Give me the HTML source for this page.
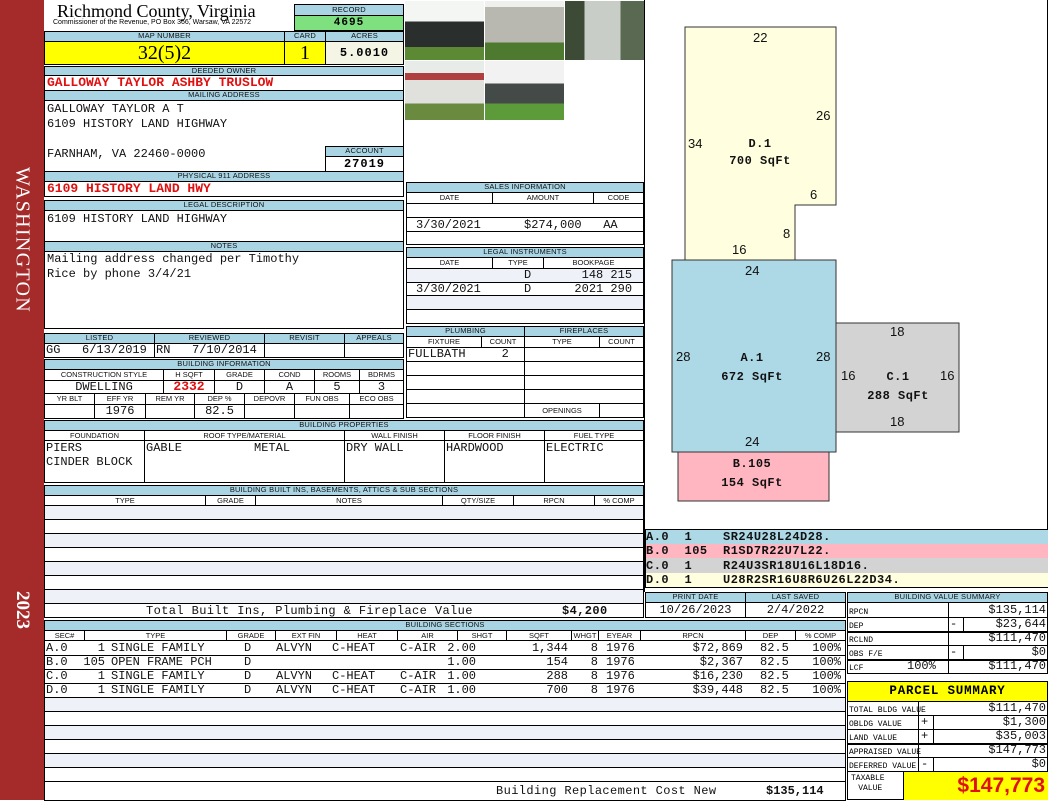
<!DOCTYPE html>
<html><head><meta charset="utf-8"><style>
*{margin:0;padding:0}
body{width:1050px;height:800px;position:relative;background:#fff;overflow:hidden;font-family:"Liberation Sans",sans-serif}
.a{position:absolute;box-sizing:border-box}
.bx{position:absolute;box-sizing:border-box;border:1px solid #000}
.hd{position:absolute;box-sizing:border-box;background:#a9d4e4;border:1px solid #000;font:7.5px "Liberation Sans",sans-serif;color:#111;text-align:center;line-height:8px;overflow:hidden;white-space:nowrap;letter-spacing:.2px}
.sh{position:absolute;box-sizing:border-box;border:1px solid #000;font:7.5px "Liberation Sans",sans-serif;color:#111;text-align:center;line-height:9px;white-space:nowrap;background:#fff}
.m{position:absolute;font-family:"Liberation Mono",monospace;font-size:12px;white-space:pre;line-height:14px;color:#111}
.r{color:#e01010;font-weight:bold;font-size:13px}
.st{position:absolute;box-sizing:border-box;background:#eef2f8}
.ln{position:absolute;height:1px;background:#000}
.vl{position:absolute;width:1px;background:#000}
.sk{position:absolute;font:13px "Liberation Sans",sans-serif;color:#111}
.sl{position:absolute;font:bold 12px "Liberation Mono",monospace;color:#111;white-space:pre;text-align:center;letter-spacing:.5px}
.bv{position:absolute;font:8px "Liberation Mono",monospace;white-space:pre}
.rw{position:absolute;left:0;width:850px;height:14px}
.rw div{position:absolute;top:0;font-family:"Liberation Mono",monospace;font-size:12px;white-space:pre;line-height:14px;color:#111}
.rr{text-align:right}
</style></head><body>

<div class="a" style="left:0;top:0;width:44px;height:800px;background:#a52a2a"></div>
<div class="a" style="left:22px;top:240px;transform:translate(-50%,-50%) rotate(90deg);color:#fff;font:20px 'Liberation Serif',serif;white-space:nowrap;letter-spacing:1.3px">WASHINGTON</div>
<div class="a" style="left:22px;top:610px;transform:translate(-50%,-50%) rotate(90deg);color:#fff;font:bold 19px 'Liberation Serif',serif;white-space:nowrap">2023</div>

<div class="a" style="left:57px;top:1px;font:18px 'Liberation Serif',serif;color:#000">Richmond County, Virginia</div>
<div class="a" style="left:53px;top:19px;font:7px 'Liberation Sans',sans-serif;color:#000;white-space:nowrap">Commissioner of the Revenue, PO Box 366, Warsaw, VA 22572</div>
<div class="hd" style="left:294px;top:4px;width:110px;height:12px;line-height:10px">RECORD</div>
<div class="bx" style="left:294px;top:15px;width:110px;height:16px;background:#7fe07f;text-align:center;font:bold 11px 'Liberation Mono',monospace;line-height:14px;letter-spacing:1px">4695</div>

<div class="hd" style="left:44px;top:31px;width:241px;height:11px">MAP NUMBER</div>
<div class="hd" style="left:284px;top:31px;width:42px;height:11px">CARD</div>
<div class="hd" style="left:325px;top:31px;width:79px;height:11px">ACRES</div>
<div class="bx" style="left:44px;top:41px;width:241px;height:24px;background:#ffff00;text-align:center;font:20px 'Liberation Serif',serif;line-height:22px">32(5)2</div>
<div class="bx" style="left:284px;top:41px;width:42px;height:24px;background:#ffff00;text-align:center;font:20px 'Liberation Serif',serif;line-height:22px">1</div>
<div class="bx" style="left:325px;top:41px;width:79px;height:24px;background:#f5f5e6;text-align:center;font:bold 12px 'Liberation Mono',monospace;line-height:22px;letter-spacing:1px">5.0010</div>

<div class="hd" style="left:44px;top:66px;width:360px;height:10px">DEEDED OWNER</div>
<div class="bx" style="left:44px;top:75px;width:360px;height:16px"></div>
<div class="m r" style="left:47px;top:76px">GALLOWAY TAYLOR ASHBY TRUSLOW</div>
<div class="hd" style="left:44px;top:90px;width:360px;height:11px">MAILING ADDRESS</div>
<div class="bx" style="left:44px;top:100px;width:360px;height:72px"></div>
<div class="m" style="left:47px;top:102px">GALLOWAY TAYLOR A T</div>
<div class="m" style="left:47px;top:117px">6109 HISTORY LAND HIGHWAY</div>
<div class="m" style="left:47px;top:147px">FARNHAM, VA 22460-0000</div>
<div class="hd" style="left:325px;top:146px;width:79px;height:11px">ACCOUNT</div>
<div class="bx" style="left:325px;top:156px;width:79px;height:16px;text-align:center;font:bold 12px 'Liberation Mono',monospace;line-height:14px;letter-spacing:1px">27019</div>
<div class="hd" style="left:44px;top:171px;width:360px;height:11px">PHYSICAL 911 ADDRESS</div>
<div class="bx" style="left:44px;top:181px;width:360px;height:16px"></div>
<div class="m r" style="left:47px;top:182px">6109 HISTORY LAND HWY</div>

<div class="hd" style="left:44px;top:200px;width:360px;height:11px">LEGAL DESCRIPTION</div>
<div class="bx" style="left:44px;top:210px;width:360px;height:32px"></div>
<div class="m" style="left:47px;top:212px">6109 HISTORY LAND HIGHWAY</div>
<div class="hd" style="left:44px;top:241px;width:360px;height:11px">NOTES</div>
<div class="bx" style="left:44px;top:251px;width:360px;height:78px"></div>
<div class="m" style="left:47px;top:252px">Mailing address changed per Timothy</div>
<div class="m" style="left:47px;top:267px">Rice by phone 3/4/21</div>

<div class="hd" style="left:44px;top:333px;width:111px;height:11px">LISTED</div>
<div class="hd" style="left:154px;top:333px;width:111px;height:11px">REVIEWED</div>
<div class="hd" style="left:264px;top:333px;width:81px;height:11px">REVISIT</div>
<div class="hd" style="left:344px;top:333px;width:60px;height:11px">APPEALS</div>
<div class="bx" style="left:44px;top:343px;width:111px;height:15px"></div>
<div class="bx" style="left:154px;top:343px;width:111px;height:15px"></div>
<div class="bx" style="left:264px;top:343px;width:81px;height:15px"></div>
<div class="bx" style="left:344px;top:343px;width:60px;height:15px"></div>
<div class="m" style="left:46px;top:343px">GG   6/13/2019</div>
<div class="m" style="left:156px;top:343px">RN   7/10/2014</div>

<div class="hd" style="left:44px;top:359px;width:360px;height:11px">BUILDING INFORMATION</div>
<div class="sh" style="left:44px;top:369px;width:120px;height:12px">CONSTRUCTION STYLE</div>
<div class="sh" style="left:163px;top:369px;width:52px;height:12px">H SQFT</div>
<div class="sh" style="left:214px;top:369px;width:51px;height:12px">GRADE</div>
<div class="sh" style="left:264px;top:369px;width:51px;height:12px">COND</div>
<div class="sh" style="left:314px;top:369px;width:46px;height:12px">ROOMS</div>
<div class="sh" style="left:359px;top:369px;width:45px;height:12px">BDRMS</div>
<div class="bx m" style="left:44px;top:380px;width:120px;height:14px;text-align:center;line-height:12px">DWELLING</div>
<div class="bx m r" style="left:163px;top:380px;width:52px;height:14px;text-align:center;line-height:12px">2332</div>
<div class="bx m" style="left:214px;top:380px;width:51px;height:14px;text-align:center;line-height:12px">D</div>
<div class="bx m" style="left:264px;top:380px;width:51px;height:14px;text-align:center;line-height:12px">A</div>
<div class="bx m" style="left:314px;top:380px;width:46px;height:14px;text-align:center;line-height:12px">5</div>
<div class="bx m" style="left:359px;top:380px;width:45px;height:14px;text-align:center;line-height:12px">3</div>
<div class="sh" style="left:44px;top:393px;width:51px;height:12px">YR BLT</div>
<div class="sh" style="left:94px;top:393px;width:52px;height:12px">EFF YR</div>
<div class="sh" style="left:145px;top:393px;width:50px;height:12px">REM YR</div>
<div class="sh" style="left:194px;top:393px;width:51px;height:12px">DEP %</div>
<div class="sh" style="left:244px;top:393px;width:51px;height:12px">DEPOVR</div>
<div class="sh" style="left:294px;top:393px;width:56px;height:12px">FUN OBS</div>
<div class="sh" style="left:349px;top:393px;width:55px;height:12px">ECO OBS</div>
<div class="bx" style="left:44px;top:404px;width:51px;height:15px"></div>
<div class="bx m" style="left:94px;top:404px;width:52px;height:15px;text-align:center;line-height:13px">1976</div>
<div class="bx" style="left:145px;top:404px;width:50px;height:15px"></div>
<div class="bx m" style="left:194px;top:404px;width:51px;height:15px;text-align:center;line-height:13px">82.5</div>
<div class="bx" style="left:244px;top:404px;width:51px;height:15px"></div>
<div class="bx" style="left:294px;top:404px;width:56px;height:15px"></div>
<div class="bx" style="left:349px;top:404px;width:55px;height:15px"></div>

<!-- photos -->
<div class="a" style="left:405px;top:1px;width:79px;height:59px;background:linear-gradient(#f4f6f4 0 35%,#2a2e2c 35% 78%,#5c8a34 78%)"></div>
<div class="a" style="left:485px;top:1px;width:79px;height:59px;background:linear-gradient(#eef0ee 0 10%,#b8b8b0 10% 70%,#4d7a2e 70%)"></div>
<div class="a" style="left:565px;top:1px;width:79px;height:59px;background:linear-gradient(90deg,#3d4a36 0 25%,#c9cdc8 25% 70%,#5a6a52 70%)"></div>
<div class="a" style="left:405px;top:61px;width:79px;height:59px;background:linear-gradient(#e8ece8 0 20%,#b04040 20% 32%,#e0e0dc 32% 72%,#6a8a40 72%)"></div>
<div class="a" style="left:485px;top:61px;width:79px;height:59px;background:linear-gradient(#f2f2f2 0 38%,#444a48 38% 72%,#5c9a3a 72%)"></div>
<div class="vl" style="left:644px;top:0;height:592px"></div>
<div class="vl" style="left:1047px;top:0;height:530px"></div>

<div class="bx" style="left:406px;top:182px;width:238px;height:63px"></div>
<div class="hd" style="left:406px;top:182px;width:238px;height:11px">SALES INFORMATION</div>
<div class="sh" style="left:406px;top:192px;width:87px;height:12px">DATE</div>
<div class="sh" style="left:492px;top:192px;width:102px;height:12px">AMOUNT</div>
<div class="sh" style="left:593px;top:192px;width:51px;height:12px">CODE</div>
<div class="ln" style="left:406px;top:217px;width:238px"></div>
<div class="ln" style="left:406px;top:231px;width:238px"></div>
<div class="m" style="left:416px;top:218px">3/30/2021      $274,000   AA</div>

<div class="bx" style="left:406px;top:247px;width:238px;height:77px"></div>
<div class="hd" style="left:406px;top:247px;width:238px;height:11px">LEGAL INSTRUMENTS</div>
<div class="sh" style="left:406px;top:257px;width:87px;height:12px">DATE</div>
<div class="sh" style="left:492px;top:257px;width:52px;height:12px">TYPE</div>
<div class="sh" style="left:543px;top:257px;width:101px;height:12px">BOOKPAGE</div>
<div class="st" style="left:407px;top:269px;width:236px;height:13px"></div>
<div class="st" style="left:407px;top:296px;width:236px;height:13px"></div>
<div class="ln" style="left:406px;top:282px;width:238px"></div>
<div class="ln" style="left:406px;top:295px;width:238px"></div>
<div class="ln" style="left:406px;top:309px;width:238px"></div>
<div class="m" style="left:416px;top:268px">               D       148 215</div>
<div class="m" style="left:416px;top:282px">3/30/2021      D      2021 290</div>

<div class="bx" style="left:406px;top:326px;width:238px;height:92px"></div>
<div class="hd" style="left:406px;top:326px;width:119px;height:11px">PLUMBING</div>
<div class="hd" style="left:524px;top:326px;width:120px;height:11px">FIREPLACES</div>
<div class="sh" style="left:406px;top:336px;width:76px;height:12px">FIXTURE</div>
<div class="sh" style="left:481px;top:336px;width:44px;height:12px">COUNT</div>
<div class="sh" style="left:524px;top:336px;width:76px;height:12px">TYPE</div>
<div class="sh" style="left:599px;top:336px;width:45px;height:12px">COUNT</div>
<div class="vl" style="left:524px;top:336px;height:82px"></div>
<div class="ln" style="left:406px;top:361px;width:238px"></div>
<div class="ln" style="left:406px;top:375px;width:238px"></div>
<div class="ln" style="left:406px;top:389px;width:238px"></div>
<div class="ln" style="left:406px;top:403px;width:238px"></div>
<div class="m" style="left:408px;top:347px">FULLBATH     2</div>
<div class="sh" style="left:524px;top:403px;width:76px;height:15px;line-height:13px">OPENINGS</div>
<div class="bx" style="left:599px;top:403px;width:45px;height:15px"></div>

<div class="bx" style="left:44px;top:420px;width:600px;height:63px"></div>
<div class="hd" style="left:44px;top:420px;width:600px;height:11px">BUILDING PROPERTIES</div>
<div class="sh" style="left:44px;top:430px;width:101px;height:11px">FOUNDATION</div>
<div class="sh" style="left:144px;top:430px;width:201px;height:11px">ROOF TYPE/MATERIAL</div>
<div class="sh" style="left:344px;top:430px;width:101px;height:11px">WALL FINISH</div>
<div class="sh" style="left:444px;top:430px;width:101px;height:11px">FLOOR FINISH</div>
<div class="sh" style="left:544px;top:430px;width:100px;height:11px">FUEL TYPE</div>
<div class="vl" style="left:144px;top:430px;height:53px"></div>
<div class="vl" style="left:344px;top:430px;height:53px"></div>
<div class="vl" style="left:444px;top:430px;height:53px"></div>
<div class="vl" style="left:544px;top:430px;height:53px"></div>
<div class="m" style="left:46px;top:441px">PIERS</div>
<div class="m" style="left:46px;top:455px">CINDER BLOCK</div>
<div class="m" style="left:146px;top:441px">GABLE          METAL</div>
<div class="m" style="left:346px;top:441px">DRY WALL</div>
<div class="m" style="left:446px;top:441px">HARDWOOD</div>
<div class="m" style="left:546px;top:441px">ELECTRIC</div>

<div class="bx" style="left:44px;top:485px;width:600px;height:133px"></div>
<div class="hd" style="left:44px;top:485px;width:600px;height:11px">BUILDING BUILT INS, BASEMENTS, ATTICS &amp; SUB SECTIONS</div>
<div class="sh" style="left:44px;top:495px;width:162px;height:11px">TYPE</div>
<div class="sh" style="left:205px;top:495px;width:51px;height:11px">GRADE</div>
<div class="sh" style="left:255px;top:495px;width:188px;height:11px">NOTES</div>
<div class="sh" style="left:442px;top:495px;width:72px;height:11px">QTY/SIZE</div>
<div class="sh" style="left:513px;top:495px;width:82px;height:11px">RPCN</div>
<div class="sh" style="left:594px;top:495px;width:50px;height:11px">% COMP</div>
<div class="st" style="left:45px;top:506px;width:598px;height:13px"></div>
<div class="st" style="left:45px;top:534px;width:598px;height:13px"></div>
<div class="st" style="left:45px;top:562px;width:598px;height:13px"></div>
<div class="st" style="left:45px;top:590px;width:598px;height:13px"></div>
<div class="ln" style="left:44px;top:519px;width:600px"></div>
<div class="ln" style="left:44px;top:533px;width:600px"></div>
<div class="ln" style="left:44px;top:547px;width:600px"></div>
<div class="ln" style="left:44px;top:561px;width:600px"></div>
<div class="ln" style="left:44px;top:575px;width:600px"></div>
<div class="ln" style="left:44px;top:589px;width:600px"></div>
<div class="ln" style="left:44px;top:603px;width:600px"></div>
<div class="m" style="left:146px;top:604px;letter-spacing:.4px">Total Built Ins, Plumbing &amp; Fireplace Value</div>
<div class="m" style="left:562px;top:604px;font-weight:bold;letter-spacing:.4px">$4,200</div>

<svg class="a" style="left:0;top:0" width="1050" height="530">
<polygon points="685,27 836,27 836,205 795,205 795,260 685,260" fill="#ffffe0" stroke="#333" stroke-width="1"/>
<rect x="672" y="260" width="164" height="192" fill="#add8e6" stroke="#333"/>
<rect x="836" y="323" width="123" height="109" fill="#d3d3d3" stroke="#333"/>
<rect x="678" y="452" width="151" height="49" fill="#ffb6c1" stroke="#333"/>
</svg>
<div class="sk" style="left:753px;top:30px">22</div>
<div class="sk" style="left:816px;top:108px">26</div>
<div class="sk" style="left:688px;top:136px">34</div>
<div class="sk" style="left:810px;top:187px">6</div>
<div class="sk" style="left:783px;top:226px">8</div>
<div class="sk" style="left:732px;top:242px">16</div>
<div class="sl" style="left:700px;top:137px;width:120px">D.1<br><span style="line-height:20px">700 SqFt</span></div>
<div class="sk" style="left:745px;top:263px">24</div>
<div class="sk" style="left:676px;top:349px">28</div>
<div class="sk" style="left:816px;top:349px">28</div>
<div class="sl" style="left:692px;top:349px;width:120px;line-height:19px">A.1<br>672 SqFt</div>
<div class="sk" style="left:745px;top:434px">24</div>
<div class="sk" style="left:890px;top:324px">18</div>
<div class="sk" style="left:841px;top:368px">16</div>
<div class="sk" style="left:940px;top:368px">16</div>
<div class="sl" style="left:838px;top:368px;width:120px;line-height:19px">C.1<br>288 SqFt</div>
<div class="sk" style="left:890px;top:414px">18</div>
<div class="sl" style="left:692px;top:455px;width:120px;line-height:19px">B.105<br>154 SqFt</div>

<div class="a" style="left:645px;top:529px;width:403px;height:59px;border:1px solid #000;border-right:none"></div>
<div class="a" style="left:646px;top:530px;width:402px;height:14px;background:#add8e6"></div>
<div class="a" style="left:646px;top:544px;width:402px;height:14px;background:#ffb6c1"></div>
<div class="a" style="left:646px;top:558px;width:402px;height:15px;background:#d3d3d3"></div>
<div class="a" style="left:646px;top:573px;width:402px;height:14px;background:#ffffe0"></div>
<div class="sl" style="left:646px;top:530px;text-align:left;line-height:14.3px">A.0  1    SR24U28L24D28.
B.0  105  R1SD7R22U7L22.
C.0  1    R24U3SR18U16L18D16.
D.0  1    U28R2SR16U8R6U26L22D34.</div>

<div class="hd" style="left:645px;top:592px;width:101px;height:11px">PRINT DATE</div>
<div class="hd" style="left:745px;top:592px;width:101px;height:11px">LAST SAVED</div>
<div class="bx m" style="left:645px;top:602px;width:101px;height:16px;text-align:center;line-height:14px">10/26/2023</div>
<div class="bx m" style="left:745px;top:602px;width:101px;height:16px;text-align:center;line-height:14px">2/4/2022</div>

<div class="bx" style="left:44px;top:620px;width:802px;height:181px"></div>
<div class="hd" style="left:44px;top:620px;width:802px;height:11px">BUILDING SECTIONS</div>
<div class="sh" style="left:44px;top:630px;width:41px;height:11px">SEC#</div>
<div class="sh" style="left:84px;top:630px;width:143px;height:11px">TYPE</div>
<div class="sh" style="left:226px;top:630px;width:50px;height:11px">GRADE</div>
<div class="sh" style="left:275px;top:630px;width:62px;height:11px">EXT FIN</div>
<div class="sh" style="left:336px;top:630px;width:62px;height:11px">HEAT</div>
<div class="sh" style="left:397px;top:630px;width:61px;height:11px">AIR</div>
<div class="sh" style="left:457px;top:630px;width:50px;height:11px">SHGT</div>
<div class="sh" style="left:506px;top:630px;width:66px;height:11px">SQFT</div>
<div class="sh" style="left:571px;top:630px;width:28px;height:11px">WHGT</div>
<div class="sh" style="left:598px;top:630px;width:43px;height:11px">EYEAR</div>
<div class="sh" style="left:640px;top:630px;width:106px;height:11px">RPCN</div>
<div class="sh" style="left:745px;top:630px;width:51px;height:11px">DEP</div>
<div class="sh" style="left:795px;top:630px;width:51px;height:11px">% COMP</div>
<div class="st" style="left:45px;top:698px;width:800px;height:13px"></div>
<div class="st" style="left:45px;top:726px;width:800px;height:13px"></div>
<div class="st" style="left:45px;top:754px;width:800px;height:13px"></div>
<div class="ln" style="left:44px;top:655px;width:802px"></div>
<div class="ln" style="left:44px;top:669px;width:802px"></div>
<div class="ln" style="left:44px;top:683px;width:802px"></div>
<div class="ln" style="left:44px;top:697px;width:802px"></div>
<div class="ln" style="left:44px;top:711px;width:802px"></div>
<div class="ln" style="left:44px;top:725px;width:802px"></div>
<div class="ln" style="left:44px;top:739px;width:802px"></div>
<div class="ln" style="left:44px;top:753px;width:802px"></div>
<div class="ln" style="left:44px;top:767px;width:802px"></div>
<div class="ln" style="left:44px;top:781px;width:802px"></div>

<div class="rw" style="top:641px"><div style="left:46px">A.0</div><div class="rr" style="left:70px;width:35px">1</div><div style="left:111px">SINGLE FAMILY</div><div style="left:244px">D</div><div style="left:276px">ALVYN</div><div style="left:332px">C-HEAT</div><div style="left:400px">C-AIR</div><div class="rr" style="left:430px;width:46px">2.00</div><div class="rr" style="left:510px;width:58px">1,344</div><div class="rr" style="left:580px;width:18px">8</div><div style="left:606px">1976</div><div class="rr" style="left:660px;width:83px">$72,869</div><div style="left:760px">82.5</div><div class="rr" style="left:800px;width:41px">100%</div></div>
<div class="rw" style="top:655px"><div style="left:46px">B.0</div><div class="rr" style="left:70px;width:35px">105</div><div style="left:111px">OPEN FRAME PCH</div><div style="left:244px">D</div><div class="rr" style="left:430px;width:46px">1.00</div><div class="rr" style="left:510px;width:58px">154</div><div class="rr" style="left:580px;width:18px">8</div><div style="left:606px">1976</div><div class="rr" style="left:660px;width:83px">$2,367</div><div style="left:760px">82.5</div><div class="rr" style="left:800px;width:41px">100%</div></div>
<div class="rw" style="top:669px"><div style="left:46px">C.0</div><div class="rr" style="left:70px;width:35px">1</div><div style="left:111px">SINGLE FAMILY</div><div style="left:244px">D</div><div style="left:276px">ALVYN</div><div style="left:332px">C-HEAT</div><div style="left:400px">C-AIR</div><div class="rr" style="left:430px;width:46px">1.00</div><div class="rr" style="left:510px;width:58px">288</div><div class="rr" style="left:580px;width:18px">8</div><div style="left:606px">1976</div><div class="rr" style="left:660px;width:83px">$16,230</div><div style="left:760px">82.5</div><div class="rr" style="left:800px;width:41px">100%</div></div>
<div class="rw" style="top:683px"><div style="left:46px">D.0</div><div class="rr" style="left:70px;width:35px">1</div><div style="left:111px">SINGLE FAMILY</div><div style="left:244px">D</div><div style="left:276px">ALVYN</div><div style="left:332px">C-HEAT</div><div style="left:400px">C-AIR</div><div class="rr" style="left:430px;width:46px">1.00</div><div class="rr" style="left:510px;width:58px">700</div><div class="rr" style="left:580px;width:18px">8</div><div style="left:606px">1976</div><div class="rr" style="left:660px;width:83px">$39,448</div><div style="left:760px">82.5</div><div class="rr" style="left:800px;width:41px">100%</div></div>

<div class="m" style="left:496px;top:784px;letter-spacing:.4px">Building Replacement Cost New</div>
<div class="m" style="left:766px;top:784px;font-weight:bold">$135,114</div>

<div class="hd" style="left:847px;top:592px;width:201px;height:11px">BUILDING VALUE SUMMARY</div>
<div class="bx" style="left:847px;top:602px;width:201px;height:72px"></div>
<div class="vl" style="left:948px;top:602px;height:72px"></div>
<div class="vl" style="left:963px;top:617px;height:14px"></div>
<div class="vl" style="left:963px;top:645px;height:14px"></div>
<div class="ln" style="left:847px;top:617px;width:201px"></div>
<div class="ln" style="left:847px;top:631px;width:201px;height:2px"></div>
<div class="ln" style="left:847px;top:645px;width:201px"></div>
<div class="ln" style="left:847px;top:659px;width:201px;height:2px"></div>
<div class="bv" style="left:849px;top:606px;line-height:14px">RPCN
DEP
RCLND
OBS F/E
LCF</div>
<div class="m" style="left:907px;top:659px">100%</div>
<div class="m" style="left:950px;top:617px">-</div>
<div class="m" style="left:950px;top:645px">-</div>
<div class="m" style="left:948px;top:603px;width:98px;text-align:right">$135,114
$23,644
$111,470
$0
$111,470</div>

<div class="bx" style="left:847px;top:681px;width:201px;height:21px;background:#ffff00;text-align:center;font:bold 12.5px 'Liberation Mono',monospace;line-height:19px;letter-spacing:.8px">PARCEL SUMMARY</div>
<div class="bx" style="left:847px;top:701px;width:201px;height:99px"></div>
<div class="vl" style="left:918px;top:701px;height:70px"></div>
<div class="vl" style="left:933px;top:715px;height:28px"></div>
<div class="vl" style="left:933px;top:757px;height:14px"></div>
<div class="ln" style="left:847px;top:715px;width:201px"></div>
<div class="ln" style="left:847px;top:729px;width:201px"></div>
<div class="ln" style="left:847px;top:743px;width:201px;height:2px"></div>
<div class="ln" style="left:847px;top:757px;width:201px"></div>
<div class="ln" style="left:847px;top:771px;width:201px"></div>
<div class="bv" style="left:849px;top:704px;line-height:14px">TOTAL BLDG VALUE
OBLDG VALUE
LAND VALUE
APPRAISED VALUE
DEFERRED VALUE</div>
<div class="m" style="left:921px;top:715px">+</div>
<div class="m" style="left:921px;top:729px">+</div>
<div class="m" style="left:921px;top:757px">-</div>
<div class="m" style="left:918px;top:701px;width:128px;text-align:right">$111,470
$1,300
$35,003
$147,773
$0</div>
<div class="bv" style="left:851px;top:774px;line-height:10px;text-align:center">TAXABLE
 VALUE</div>
<div class="a" style="left:903px;top:772px;width:145px;height:28px;background:#ffff00;border-left:1px solid #000;text-align:right;padding-right:3px;font:bold 21px 'Liberation Sans',sans-serif;color:#e01010;line-height:28px">$147,773</div>

</body></html>
